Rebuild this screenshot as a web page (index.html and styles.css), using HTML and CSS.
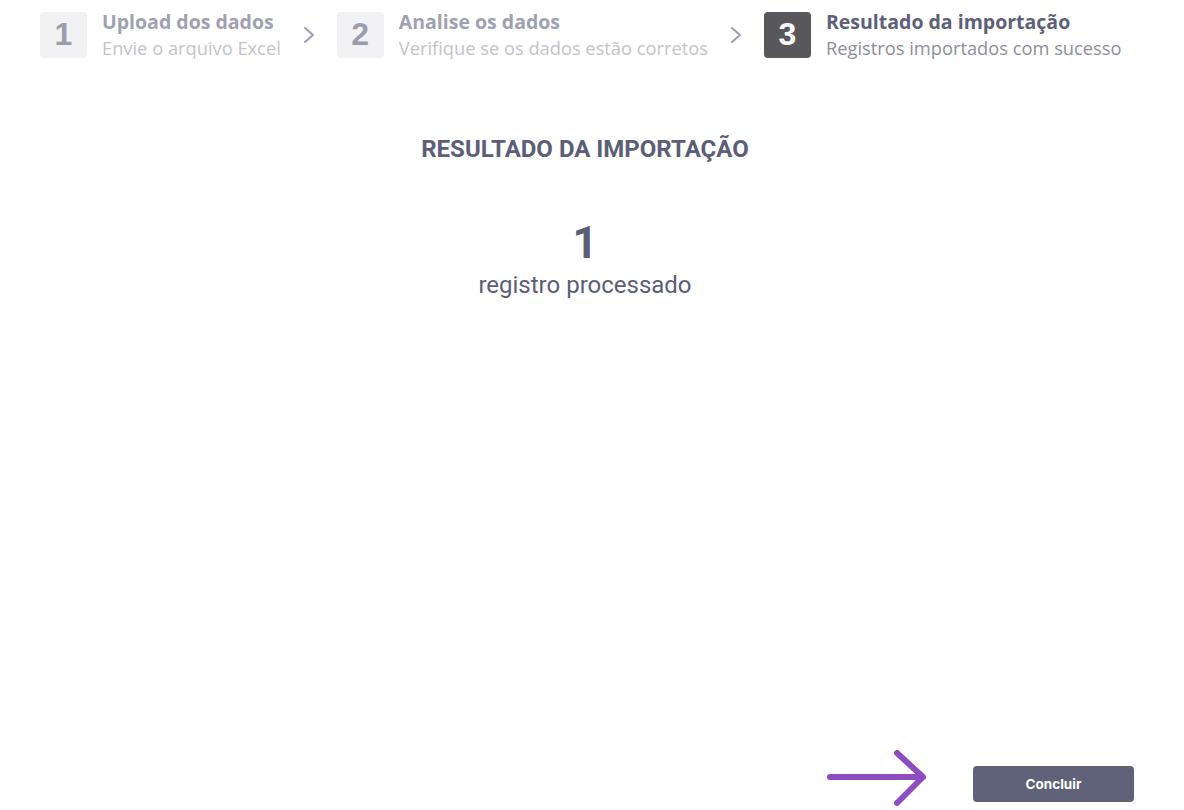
FILE: index.html
```html
<!DOCTYPE html>
<html lang="pt-BR">
<head>
<meta charset="utf-8">
<title>Resultado da importação</title>
<link rel="stylesheet" href="styles.css">
</head>
<body>
<div class="page">
  <nav class="steps">
    <div class="step">
      <div class="step-num">1</div>
      <div class="step-text">
        <div class="step-title">Upload dos dados</div>
        <div class="step-sub">Envie o arquivo Excel</div>
      </div>
    </div>
    <svg class="chev" width="12" height="18" viewBox="0 0 12 18"><path d="M2 2 L10 9 L2 16" fill="none" stroke="#9b9dae" stroke-width="2" stroke-linecap="round" stroke-linejoin="round"/></svg>
    <div class="step">
      <div class="step-num">2</div>
      <div class="step-text">
        <div class="step-title">Analise os dados</div>
        <div class="step-sub">Verifique se os dados estão corretos</div>
      </div>
    </div>
    <svg class="chev" width="12" height="18" viewBox="0 0 12 18"><path d="M2 2 L10 9 L2 16" fill="none" stroke="#9b9dae" stroke-width="2" stroke-linecap="round" stroke-linejoin="round"/></svg>
    <div class="step active">
      <div class="step-num">3</div>
      <div class="step-text">
        <div class="step-title">Resultado da importação</div>
        <div class="step-sub">Registros importados com sucesso</div>
      </div>
    </div>
  </nav>

  <main class="result">
    <h1 class="result-title">RESULTADO DA IMPORTAÇÃO</h1>
    <div class="result-count">1</div>
    <div class="result-label">registro processado</div>
  </main>

  <footer class="actions">
    <svg class="hint-arrow" width="104" height="58" viewBox="0 0 104 58"><path d="M5 27 L98 27 M72 3 L98 27 L72 53" fill="none" stroke="#8d4cbf" stroke-width="6" stroke-linecap="round" stroke-linejoin="round"/></svg>
    <button class="btn-primary" type="button">Concluir</button>
  </footer>
</div>
</body>
</html>
```

FILE: styles.css
```css
* { box-sizing: border-box; }
html, body { margin: 0; padding: 0; background: #ffffff; }
body { font-family: "Open Sans", "Liberation Sans", sans-serif; }

.page {
  height: 810px;
  display: flex;
  flex-direction: column;
}

.steps {
  display: flex;
  align-items: center;
  gap: 22px;
  padding: 10px 40px 0 40px;
}

.step {
  display: flex;
  align-items: center;
  gap: 15px;
}

.step-num {
  width: 47px;
  height: 46px;
  border-radius: 4px;
  background: #f2f2f4;
  color: #9b9dae;
  font-family: "Liberation Sans", "Inter", sans-serif;
  font-weight: 700;
  font-size: 32px;
  display: flex;
  align-items: center;
  justify-content: center;
}

.step-text {
  display: flex;
  flex-direction: column;
  gap: 3px;
}

.step-title {
  font-size: 19.5px;
  line-height: 24px;
  font-weight: 700;
  color: #9fa1b1;
  white-space: nowrap;
}

.step-sub {
  font-size: 18.3px;
  line-height: 22px;
  color: #c3c3cb;
  white-space: nowrap;
}

.step.active .step-num { background: #58585c; color: #ffffff; }
.step.active .step-title { color: #5d6079; }
.step.active .step-sub { color: #8e8e9a; }

.chev { flex: none; }

.result {
  flex: 1;
  display: flex;
  flex-direction: column;
  align-items: center;
  padding: 76px 14px 0 0;
  font-family: "Roboto", "Liberation Sans", sans-serif;
  color: #5b5e76;
}

.result-title {
  margin: 0;
  font-size: 24px;
  line-height: 28px;
  font-weight: 700;
}

.result-count {
  margin-top: 54px;
  font-size: 44px;
  line-height: 52px;
  font-weight: 700;
}

.result-label {
  margin-top: 2px;
  font-size: 24px;
  line-height: 28px;
}

.actions {
  display: flex;
  align-items: flex-end;
  justify-content: flex-end;
  gap: 44px;
  padding: 0 50px 8px 0;
}

.hint-arrow { display: block; margin-bottom: -6px; }

.btn-primary {
  width: 161px;
  height: 36px;
  border: 0;
  border-radius: 4px;
  background: #5f6278;
  color: #ffffff;
  font-family: "Inter", "Liberation Sans", sans-serif;
  font-weight: 700;
  font-size: 13.5px;
}
```
